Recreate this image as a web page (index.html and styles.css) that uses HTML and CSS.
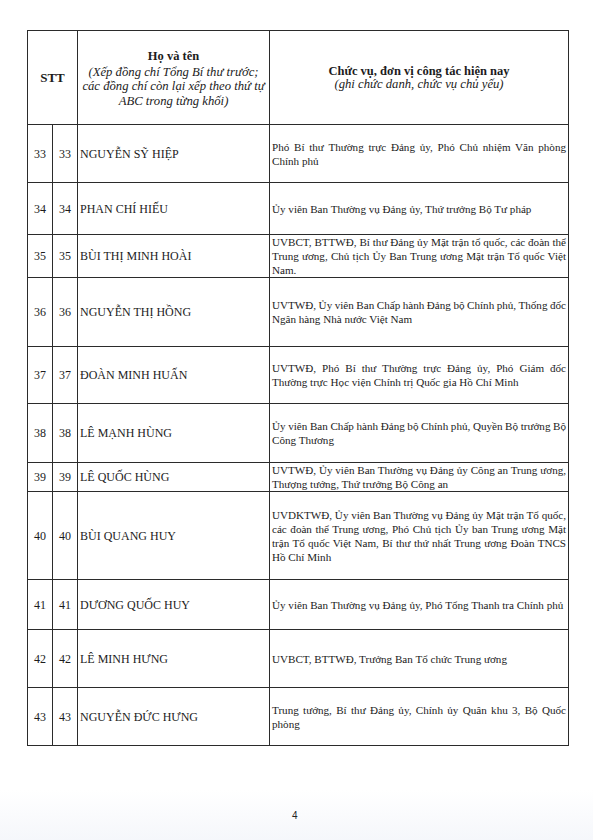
FILE: index.html
```html
<!DOCTYPE html>
<html lang="vi">
<head>
<meta charset="utf-8">
<title>Danh sách</title>
<link rel="stylesheet" href="styles.css">
</head>
<body>
<div class="page">
  <table class="list">
    <colgroup>
      <col class="c-no">
      <col class="c-no2">
      <col class="c-name">
      <col class="c-pos">
    </colgroup>
    <thead>
      <tr class="head">
        <th colspan="2" class="h-stt">STT</th>
        <th class="h-name"><span class="hb">Họ và tên</span><span class="hi">(Xếp đồng chí Tổng Bí thư trước;<br>các đồng chí còn lại xếp theo thứ tự<br>ABC trong từng khối)</span></th>
        <th class="h-pos"><span class="hb">Chức vụ, đơn vị công tác hiện nay</span><span class="hi">(ghi chức danh, chức vụ chủ yếu)</span></th>
      </tr>
    </thead>
    <tbody>
      <tr class="r58"><td class="no">33</td><td class="no">33</td><td class="name">NGUYỄN SỸ HIỆP</td><td class="pos"><span class="ln">Phó Bí thư Thường trực Đảng ủy, Phó Chủ nhiệm Văn phòng</span>Chính phủ</td></tr>
      <tr class="r52"><td class="no">34</td><td class="no">34</td><td class="name">PHAN CHÍ HIẾU</td><td class="pos">Ủy viên Ban Thường vụ Đảng ủy, Thứ trưởng Bộ Tư pháp</td></tr>
      <tr class="r43"><td class="no">35</td><td class="no">35</td><td class="name">BÙI THỊ MINH HOÀI</td><td class="pos"><span class="ln">UVBCT, BTTWĐ, Bí thư Đảng ủy Mặt trận tổ quốc, các đoàn thể</span><span class="ln">Trung ương, Chủ tịch Ủy Ban Trung ương Mặt trận Tổ quốc Việt</span>Nam.</td></tr>
      <tr class="r69"><td class="no">36</td><td class="no">36</td><td class="name">NGUYỄN THỊ HỒNG</td><td class="pos"><span class="ln">UVTWĐ, Ủy viên Ban Chấp hành Đảng bộ Chính phủ, Thống đốc</span>Ngân hàng Nhà nước Việt Nam</td></tr>
      <tr class="r57"><td class="no">37</td><td class="no">37</td><td class="name">ĐOÀN MINH HUẤN</td><td class="pos"><span class="ln">UVTWĐ, Phó Bí thư Thường trực Đảng ủy, Phó Giám đốc</span>Thường trực Học viện Chính trị Quốc gia Hồ Chí Minh</td></tr>
      <tr class="r59"><td class="no">38</td><td class="no">38</td><td class="name">LÊ MẠNH HÙNG</td><td class="pos"><span class="ln">Ủy viên Ban Chấp hành Đảng bộ Chính phủ, Quyền Bộ trưởng Bộ</span>Công Thương</td></tr>
      <tr class="r28"><td class="no">39</td><td class="no">39</td><td class="name">LÊ QUỐC HÙNG</td><td class="pos"><span class="ln">UVTWĐ, Ủy viên Ban Thường vụ Đảng ủy Công an Trung ương,</span>Thượng tướng, Thứ trưởng Bộ Công an</td></tr>
      <tr class="r88"><td class="no">40</td><td class="no">40</td><td class="name">BÙI QUANG HUY</td><td class="pos"><span class="ln">UVDKTWĐ, Ủy viên Ban Thường vụ Đảng ủy Mặt trận Tổ quốc,</span><span class="ln">các đoàn thể Trung ương, Phó Chủ tịch Ủy ban Trung ương Mặt</span><span class="ln">trận Tổ quốc Việt Nam, Bí thư thứ nhất Trung ương Đoàn TNCS</span>Hồ Chí Minh</td></tr>
      <tr class="r50"><td class="no">41</td><td class="no">41</td><td class="name">DƯƠNG QUỐC HUY</td><td class="pos">Ủy viên Ban Thường vụ Đảng ủy, Phó Tổng Thanh tra Chính phủ</td></tr>
      <tr class="r58"><td class="no">42</td><td class="no">42</td><td class="name">LÊ MINH HƯNG</td><td class="pos">UVBCT, BTTWĐ, Trưởng Ban Tổ chức Trung ương</td></tr>
      <tr class="r58"><td class="no">43</td><td class="no">43</td><td class="name">NGUYỄN ĐỨC HƯNG</td><td class="pos"><span class="ln">Trung tướng, Bí thư Đảng ủy, Chính ủy Quân khu 3, Bộ Quốc</span>phòng</td></tr>
    </tbody>
  </table>
  <div class="pageno">4</div>
</div>
</body>
</html>
```
FILE: styles.css
```css
html {
  background: linear-gradient(to bottom, #ffffff 0, #ffffff 790px, #f5f7fb 840px);
  min-height: 100%;
}
body {
  margin: 0;
  font-family: "Liberation Serif", "Times New Roman", serif;
  color: #1c1c1c;
}
.page {
  width: 593px;
  height: 840px;
  box-sizing: border-box;
  padding: 30px 0 0 27px;
}
.list {
  border-collapse: collapse;
  table-layout: fixed;
  width: 541px;
  font-size: 12px;
  line-height: 14px;
}
.c-no { width: 25px; }
.c-no2 { width: 25px; }
.c-name { width: 192px; }
.c-pos { width: 299px; }
.list th,
.list td {
  border: 1px solid #2b2b2b;
  padding: 0 2px;
  vertical-align: middle;
}
.head { height: 94px; }
.h-stt {
  font-size: 13px;
  font-weight: bold;
  text-align: center;
  padding-top: 5px;
}
.h-name,
.h-pos {
  text-align: center;
  font-weight: normal;
}
.hb {
  display: block;
  font-weight: bold;
  font-size: 12.5px;
  line-height: 18px;
}
.hi {
  display: block;
  font-style: italic;
  font-size: 12.7px;
  line-height: 14.5px;
}
.h-name { padding-bottom: 4px; }
.h-pos .hb { line-height: 13px; }
.h-pos .hi { line-height: 12px; }
.no {
  text-align: center;
  padding: 0;
}
.name {
  padding-left: 2px;
  white-space: nowrap;
}
.pos {
  text-align: left;
  font-size: 11.1px;
  padding: 0 1px 0 2px;
}
.ln {
  display: block;
  text-align: justify;
  text-align-last: justify;
  word-spacing: -1.2px;
}
.r28 { height: 28px; }
.r43 { height: 43px; }
.r50 { height: 50px; }
.r52 { height: 52px; }
.r57 { height: 57px; }
.r58 { height: 58px; }
.r59 { height: 59px; }
.r69 { height: 69px; }
.r88 { height: 88px; }
.pageno {
  margin: 64px 0 0 265px;
  font-family: "Liberation Sans", Arial, sans-serif;
  font-size: 10px;
  line-height: 12px;
  color: #222;
}
```
